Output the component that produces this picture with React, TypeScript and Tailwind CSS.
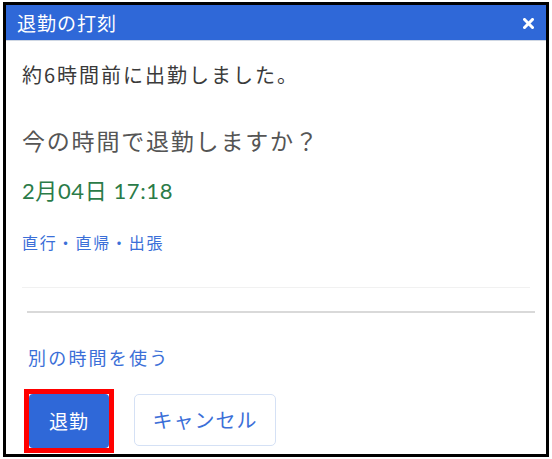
export default function App() {
  const jp = "font-['Noto_Sans_CJK_JP',sans-serif]";

  return (
    <div className={`w-[552px] h-[459px] bg-white pt-[2px] pl-[3px] overflow-hidden ${jp}`}>
      <div className="w-[546px] h-[455px] border-[3px] border-black bg-white overflow-hidden flex flex-col">
        {/* header */}
        <div className="h-[36px] shrink-0 bg-[#2f68d8] border-b border-[#cfd7e3] flex items-center justify-between pl-[11px] pr-[12px]">
          <span className="text-white text-[19px] tracking-[1px] leading-none">退勤の打刻</span>
          <svg width="11" height="11" viewBox="0 0 11 11" className="mt-[1px]">
            <path d="M1.5 1.5 L9.5 9.5 M9.5 1.5 L1.5 9.5" stroke="white" strokeWidth="3" strokeLinecap="square" />
          </svg>
        </div>

        {/* message */}
        <div className="pl-[16px] pr-[16px]">
          <p className="mt-[20px] h-[28px] leading-[28px] text-[20px] tracking-[2px] text-[#3a3a3a]">
            約6時間前に出勤しました。
          </p>
          <p className="mt-[35px] h-[32px] leading-[32px] text-[23px] tracking-[1.8px] text-[#555]">
            今の時間で退勤しますか？
          </p>
          <p className="mt-[20px] h-[30px] leading-[30px] text-[22px] tracking-[0.6px] text-[#2b7b48] font-['Lato','Noto_Sans_CJK_JP',sans-serif]">
            2月04日 17:18
          </p>
          <p className="mt-[24px] h-[24px] leading-[24px] text-[16px] tracking-[1.8px] text-[#3b6fd8]">
            直行・直帰・出張
          </p>
          <div className="mt-[33px] h-px bg-[#f1f1f1]" />
        </div>

        {/* footer */}
        <div className="pl-[21px] pr-[11px]">
          <div className="mt-[23px] h-[2px] bg-[#d9d9d9]" />
          <p className="mt-[32px] ml-[1px] h-[24px] leading-[24px] text-[18px] tracking-[2.2px] text-[#3b6fd8]">
            別の時間を使う
          </p>
          <div className="mt-[20px] -ml-[3px] flex items-start">
            <div className="border-[5px] border-[#ff0000]">
              <button className="w-[80px] h-[54px] rounded-[4px] bg-[#2f68d8] text-white text-[19px] tracking-[1px]">
                退勤
              </button>
            </div>
            <button className="ml-[20px] mt-[5px] w-[142px] h-[52px] rounded-[5px] border border-[#d5e1f5] bg-white text-[#3b6fd8] text-[20px] tracking-[1px]">
              キャンセル
            </button>
          </div>
        </div>
      </div>
    </div>
  );
}
